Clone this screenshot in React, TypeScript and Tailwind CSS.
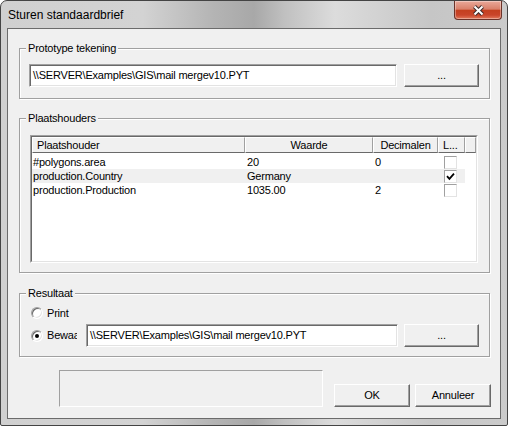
import React from "react";

const PATH = "\\\\SERVER\\Examples\\GIS\\mail mergev10.PYT";

const ROWS = [
  { name: "#polygons.area", value: "20", dec: "0", checked: false, selected: false },
  { name: "production.Country", value: "Germany", dec: "", checked: true, selected: true },
  { name: "production.Production", value: "1035.00", dec: "2", checked: false, selected: false },
];

function Button({ className = "", children }: { className?: string; children: React.ReactNode }) {
  return (
    <button
      className={`flex h-[23px] items-center justify-center border border-t-white border-l-white border-r-[#696969] border-b-[#696969] bg-[#f0f0f0] text-black shadow-[inset_-1px_-1px_0_#a0a0a0] ${className}`}
    >
      {children}
    </button>
  );
}

function TextBox({ className = "", value }: { className?: string; value: string }) {
  return (
    <div
      className={`h-[23px] overflow-hidden whitespace-nowrap border border-t-[#a0a0a0] border-l-[#a0a0a0] border-r-white border-b-white bg-white pl-[3px] leading-[20px] shadow-[inset_1px_1px_0_#696969,inset_-1px_-1px_0_#e3e3e3] ${className}`}
    >
      {value}
    </div>
  );
}

function Group({ label, className = "", children }: { label: string; className?: string; children: React.ReactNode }) {
  return (
    <div className={`relative border border-[#a0a0a0] shadow-[inset_1px_1px_0_#fff,1px_1px_0_#fff] ${className}`}>
      <span className="absolute -top-[7px] left-[6px] bg-[#f0f0f0] px-[2px] leading-[13px]">{label}</span>
      {children}
    </div>
  );
}

function Radio({ checked }: { checked?: boolean }) {
  return (
    <span className="flex h-[12px] w-[12px] shrink-0 items-center justify-center rounded-full border border-t-[#a0a0a0] border-l-[#a0a0a0] border-r-white border-b-white bg-white shadow-[inset_1px_1px_0_#696969,inset_-1px_-1px_0_#e3e3e3]">
      {checked && <span className="h-[4px] w-[4px] rounded-full bg-black" />}
    </span>
  );
}

function Check({ checked }: { checked?: boolean }) {
  return (
    <span className="mt-[1px] ml-[6px] flex h-[13px] w-[13px] items-center justify-center border border-t-[#a0a0a0] border-l-[#a0a0a0] border-r-[#e3e3e3] border-b-[#e3e3e3] bg-white">
      {checked && (
        <svg width="9" height="9" viewBox="0 0 9 9">
          <path d="M1 4.2 L3.4 6.8 L8 1.6" fill="none" stroke="#000" strokeWidth="1.8" />
        </svg>
      )}
    </span>
  );
}

const headCell =
  "flex h-[16px] items-center border-t border-l border-t-white border-l-white border-r border-b border-r-[#a0a0a0] border-b-[#696969] bg-[#f0f0f0]";

export default function App() {
  return (
    <div className="flex h-[426px] w-[508px] flex-col rounded-t-[7px] rounded-b-[2px] border border-[#444] bg-[linear-gradient(to_right,#d0d0d0_0%,#d3d3d3_28%,#b4b4b4_42%,#a8a8a8_50%,#c0c0c0_56%,#dcdcdc_66%,#c6c6c6_85%,#cbcbcb_100%)] font-['Liberation_Sans',Arial,sans-serif] text-[11px] tracking-[-0.2px] text-black">
      {/* Title bar */}
      <div className="flex h-[27px] shrink-0 items-start justify-between">
        <div className="self-center pl-[7px] text-[12px] leading-[14px] tracking-normal">Sturen standaardbrief</div>
        <div className="mr-[5px] flex h-[19px] w-[48px] items-center justify-center rounded-b-[4px] border border-t-0 border-[#6b3329] bg-[linear-gradient(to_bottom,#e9a99a_0%,#d9806a_45%,#c4401f_52%,#c9452a_78%,#e27a5c_100%)] shadow-[inset_0_0_0_1px_rgba(255,255,255,0.35)]">
          <svg width="13" height="11" viewBox="0 0 13 11">
            <path d="M2.5 1.5 L10.5 9.5 M10.5 1.5 L2.5 9.5" stroke="#3d2b29" strokeWidth="4" />
            <path d="M2.5 1.5 L10.5 9.5 M10.5 1.5 L2.5 9.5" stroke="#fff" strokeWidth="2" />
          </svg>
        </div>
      </div>

      {/* Frame */}
      <div className="flex flex-1 flex-col px-[6px] pb-[6px]">
        <div className="flex flex-1 flex-col border border-[#6b6b6b] bg-[#f0f0f0] pl-[11px] pr-[10px]">
          <Group label="Prototype tekening" className="mt-[19px]">
            <div className="flex items-start pt-[15px] pb-[11px] pl-[9px]">
              <TextBox className="h-[22px] w-[368px]" value={PATH} />
              <Button className="ml-[7px] w-[75px]">...</Button>
            </div>
          </Group>

          <Group label="Plaatshouders" className="mt-[19px]">
            <div className="pt-[16px] pb-[9px] pl-[10px]">
              <div className="h-[128px] w-[448px] border border-t-[#a0a0a0] border-l-[#a0a0a0] border-r-white border-b-white">
                <div className="flex h-full flex-col border border-t-[#696969] border-l-[#696969] border-r-[#e3e3e3] border-b-[#e3e3e3] bg-white">
                  <div className="flex">
                    <div className={`${headCell} w-[213px] pl-[4px]`}>Plaatshouder</div>
                    <div className={`${headCell} w-[128px] justify-center`}>Waarde</div>
                    <div className={`${headCell} w-[65px] justify-center`}>Decimalen</div>
                    <div className={`${headCell} w-[27px] pl-[4px]`}>L...</div>
                    <div className={`${headCell} flex-1`} />
                  </div>
                  <div className="pt-[2px]">
                    {ROWS.map((r) => (
                      <div key={r.name} className={`flex h-[14px] w-[433px] items-start ${r.selected ? "bg-[#f0f0f0]" : ""}`}>
                        <div className="w-[213px] pl-[1px] leading-[14px]">{r.name}</div>
                        <div className="w-[128px] pl-[2px] leading-[14px]">{r.value}</div>
                        <div className="w-[65px] pl-[2px] leading-[14px]">{r.dec}</div>
                        <div className="flex w-[27px]">
                          <Check checked={r.checked} />
                        </div>
                      </div>
                    ))}
                  </div>
                </div>
              </div>
            </div>
          </Group>

          <Group label="Resultaat" className="mt-[20px]">
            <div className="flex flex-col pt-[11px] pb-[9px] pl-[11px]">
              <div className="flex h-[16px] items-center">
                <Radio />
                <span className="ml-[4px]">Print</span>
              </div>
              <div className="mt-[3px] flex h-[23px] items-center">
                <Radio checked />
                <span className="ml-[4px] w-[30px] overflow-hidden whitespace-nowrap">Bewaar</span>
                <TextBox className="ml-[9px] w-[312px]" value={PATH} />
                <Button className="ml-[6px] w-[75px]">...</Button>
              </div>
            </div>
          </Group>

          <div className="mt-[13px] flex items-start">
            <div className="ml-[40px] h-[37px] w-[264px] border border-t-[#a0a0a0] border-l-[#a0a0a0] border-r-white border-b-white" />
            <div className="-mr-[1px] ml-auto mt-[14px] flex gap-[5px]">
              <Button className="w-[76px]">OK</Button>
              <Button className="w-[76px]">Annuleer</Button>
            </div>
          </div>
        </div>
      </div>
    </div>
  );
}
